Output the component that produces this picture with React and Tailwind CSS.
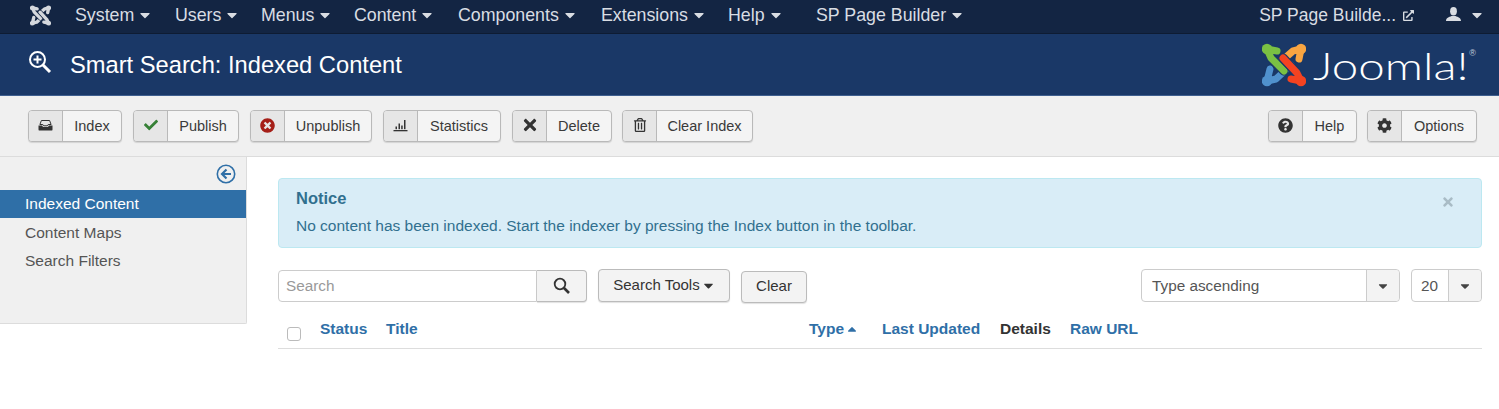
import { FaCheck, FaTimes, FaTimesCircle, FaQuestionCircle, FaCog, FaRegTrashAlt, FaCaretDown, FaCaretUp, FaExternalLinkAlt } from 'react-icons/fa';

const font = { fontFamily: '"Liberation Sans", Arial, sans-serif' };

const menu = [
  { label: 'System', w: 'w-[100px]' },
  { label: 'Users', w: 'w-[86px]' },
  { label: 'Menus', w: 'w-[93px]' },
  { label: 'Content', w: 'w-[104px]' },
  { label: 'Components', w: 'w-[143px]' },
  { label: 'Extensions', w: 'w-[127px]' },
  { label: 'Help', w: 'w-[88px]' },
  { label: 'SP Page Builder', w: 'w-[170px]' },
];

// the four strands, bottom one first
const strands = [
  'M5 38 L8 26 M5 38 L14 36 L29 22',
  'M39 6 L31 8 L15 22 M39 6 L37 16',
  'M5 6 L15 8 M5 6 L9 15 L22 28',
  'M39 38 L29 36 M39 38 L35 30 L21 15',
];

function JoomlaMark({ colors, size, bg }) {
  const ends = [[5, 38], [39, 6], [5, 6], [39, 38]];
  return (
    <svg width={size} height={size} viewBox="0 0 44 44" fill="none" strokeLinecap="round" strokeLinejoin="round">
      {strands.map((d, i) => (
        <g key={i}>
          <path d={d} stroke={bg} strokeWidth="9.5" />
          <path d={d} stroke={colors[i]} strokeWidth="7" />
          <circle cx={ends[i][0]} cy={ends[i][1]} r="5.2" fill={colors[i]} />
        </g>
      ))}
    </svg>
  );
}

function IndexIcon() {
  return (
    <svg width="15" height="11" viewBox="0 0 15 11" fill="#333">
      <path d="M3.4 0.5h8.2l1.5 4H10.2l-0.8 1.3H5.6l-0.8-1.3H1.9z" fill="none" stroke="#333" strokeWidth="1" />
      <path d="M0.5 5.6h3.6l0.9 1.4h5l0.9-1.4h3.6v3.8a1.2 1.2 0 0 1-1.2 1.2H1.7a1.2 1.2 0 0 1-1.2-1.2z" />
    </svg>
  );
}

function StatsIcon() {
  return (
    <svg width="15" height="13" viewBox="0 0 15 13" fill="#333">
      <rect x="0.5" y="11" width="14" height="1.3" />
      <rect x="2.5" y="7.5" width="1.5" height="2.7" />
      <rect x="5.5" y="4.5" width="1.5" height="5.7" />
      <rect x="8.2" y="6.5" width="1.5" height="3.7" />
      <rect x="11" y="1" width="1.5" height="9.2" />
    </svg>
  );
}

function ToolButton({ icon, label, w }) {
  return (
    <button className={`flex h-[32px] ${w} items-stretch overflow-hidden rounded-[4px] border border-[#b9b9b9] bg-[#f4f4f4] text-[14.5px] text-[#3a3a3a] shadow-[0_1px_1px_rgba(0,0,0,0.12)]`}>
      <span className="flex w-[34px] shrink-0 items-center justify-center border-r border-[#b9b9b9] bg-[#e6e6e6] pb-[2px]">{icon}</span>
      <span className="flex flex-1 items-center justify-center pt-[1px]">{label}</span>
    </button>
  );
}

function Select({ label, w, cell, text }) {
  return (
    <div className={`flex h-[33px] ${w} items-stretch rounded-[4px] border border-[#ccc] bg-white text-[15.3px] text-[#555]`}>
      <span className={`flex flex-1 items-center pt-[1px] ${text}`}>{label}</span>
      <span className={`flex ${cell} items-center justify-center rounded-r-[4px] border-l border-[#ccc] bg-[#f3f3f3]`}>
        <FaCaretDown className="text-[14px] text-[#444]" />
      </span>
    </div>
  );
}

export default function App() {
  return (
    <div className="h-[409px] w-[1499px] overflow-hidden bg-white" style={font}>
      {/* top menu */}
      <nav className="flex h-[34px] items-center border-b border-[#0e1c33] bg-[#132543] pb-[3px] text-[17.8px] text-[#d9dde3]">
        <div className="ml-[27px] mr-[21px] flex w-[27px] justify-center">
          <JoomlaMark size={21} bg="#132543" colors={['#d5d8dd', '#d5d8dd', '#d5d8dd', '#d5d8dd']} />
        </div>
        {menu.map((m) => (
          <div key={m.label} className={`flex items-center gap-[3px] ${m.w}`}>
            <span>{m.label}</span>
            <FaCaretDown className="text-[16px]" />
          </div>
        ))}
        <div className="ml-auto flex items-center">
          <span className="text-[17.5px]">SP Page Builde...</span>
          <FaExternalLinkAlt className="ml-[7px] text-[11px]" />
          <svg width="15" height="14" viewBox="0 0 15 14" fill="#d9dde3" className="ml-[32px] mb-[3px]">
            <ellipse cx="7.5" cy="4.2" rx="3.4" ry="4.2" />
            <path d="M0 14c0-3 3-4 5.5-5h4c2.500 1 5.500 2 5.500 5z" />
          </svg>
          <FaCaretDown className="ml-[8px] mr-[14px] text-[16px]" />
        </div>
      </nav>

      {/* title bar */}
      <header className="flex h-[62px] items-center border-b border-[#3f5f8f] bg-[#1a3867] pl-[28px] text-white">
        <svg width="24" height="24" viewBox="0 0 24 24" fill="none" stroke="#fff" className="mb-[6px]">
          <circle cx="9.5" cy="9.5" r="7.5" strokeWidth="2" />
          <path d="M15 15l7 7" strokeWidth="3" />
          <path d="M9.5 5.5v8M5.5 9.500h8" strokeWidth="2" />
        </svg>
        <h1 className="ml-[18px] mt-[3px] text-[23.7px] leading-none">Smart Search: Indexed Content</h1>
        <div className="ml-auto mr-[23px] flex items-center">
          <JoomlaMark size={44} bg="#1a3867" colors={['#5091cd', '#f9a541', '#7ac143', '#f44321']} />
          <span className="ml-[7px] w-[156px] origin-left scale-x-[1.25] text-[38px] leading-none" style={{ fontFamily: 'Lato, sans-serif', fontWeight: 300 }}>Joomla!</span>
          <span className="mb-[22px] text-[9px] leading-none text-[#c5cedb]">®</span>
        </div>
      </header>

      {/* toolbar */}
      <div className="flex h-[61px] items-center gap-[11px] border-b border-[#dcdcdc] bg-[#f0f0f0] pl-[28px] pr-[22px]">
        <ToolButton w="w-[94px]" label="Index" icon={<IndexIcon />} />
        <ToolButton w="w-[106px]" label="Publish" icon={<FaCheck className="text-[14px] text-[#378137]" />} />
        <ToolButton w="w-[122px]" label="Unpublish" icon={<FaTimesCircle className="text-[15px] text-[#a51f18]" />} />
        <ToolButton w="w-[118px]" label="Statistics" icon={<StatsIcon />} />
        <ToolButton w="w-[100px]" label="Delete" icon={<FaTimes className="text-[18px] text-[#333]" />} />
        <div className="-ml-[1px]">
          <ToolButton w="w-[131px]" label="Clear Index" icon={<FaRegTrashAlt className="text-[14px] text-[#333]" />} />
        </div>
        <div className="ml-auto flex gap-[10px]">
          <ToolButton w="w-[89px]" label="Help" icon={<FaQuestionCircle className="text-[15px] text-[#333]" />} />
          <ToolButton w="w-[110px]" label="Options" icon={<FaCog className="text-[15px] text-[#333]" />} />
        </div>
      </div>

      <div className="flex items-start">
        {/* sidebar */}
        <aside className="h-[167px] w-[247px] shrink-0 rounded-br-[2px] border-r border-b border-[#dcdcdc] bg-[#f0f0f0] text-[15.5px] text-[#555]">
          <div className="flex h-[33px] items-center justify-end pr-[10px]">
            <svg width="20" height="20" viewBox="0 0 20 20" fill="none" stroke="#2f6fa7">
              <circle cx="10" cy="10" r="8.7" strokeWidth="1.6" />
              <path d="M15 10H6.500M10.500 5.500L6 10l4.500 4.500" strokeWidth="2.2" />
            </svg>
          </div>
          <div className="flex h-[28px] items-center bg-[#2f6fa7] pl-[25px] text-white">Indexed Content</div>
          <div className="flex h-[28px] items-center pl-[25px] pt-[1px]">Content Maps</div>
          <div className="flex h-[28px] items-center pl-[25px] pt-[1px]">Search Filters</div>
        </aside>

        {/* main */}
        <main className="flex-1 pl-[31px] pr-[17px] pt-[21px]">
          <div className="relative h-[70px] rounded-[4px] border border-[#bce8f1] bg-[#d9edf7] pl-[17px] pt-[10px] text-[#31708f]">
            <h4 className="text-[16.5px] font-bold leading-[19px]">Notice</h4>
            <p className="mt-[9px] text-[15.5px] leading-[18px]">No content has been indexed. Start the indexer by pressing the Index button in the toolbar.</p>
            <FaTimes className="absolute right-[26px] top-[16px] text-[14px] text-[#a9bcc6]" />
          </div>

          <div className="mt-[21px] flex items-start text-[15px]">
            <div className="mt-[1px] flex h-[32px] w-[309px]">
              <div className="flex flex-1 items-center rounded-l-[4px] border border-[#ccc] bg-white pl-[7px] pt-[1px] text-[15.3px] text-[#999]">Search</div>
              <div className="flex w-[50px] items-center justify-center rounded-r-[4px] border border-l-0 border-[#bbb] bg-[#f3f3f3] shadow-[0_1px_1px_rgba(0,0,0,0.12)]">
                <svg width="17" height="17" viewBox="0 0 17 17" fill="none" stroke="#333" className="mb-[2px]">
                  <circle cx="7" cy="7" r="5.300" strokeWidth="1.800" />
                  <path d="M11 11l5 5" strokeWidth="2.600" />
                </svg>
              </div>
            </div>
            <button className="ml-[11px] flex h-[33px] w-[132px] items-center justify-center gap-0 rounded-[4px] border border-[#bbb] bg-[#f3f3f3] pl-[1px] text-[#333] shadow-[0_1px_1px_rgba(0,0,0,0.12)]">
              Search Tools <FaCaretDown className="ml-[1px] text-[15px]" />
            </button>
            <button className="ml-[11px] mt-[2px] flex h-[32px] w-[66px] items-center justify-center rounded-[4px] border border-[#bbb] bg-[#f3f3f3] pb-[1px] text-[#333] shadow-[0_1px_1px_rgba(0,0,0,0.12)]">
              Clear
            </button>
            <div className="ml-auto flex gap-[11px]">
              <Select label="Type ascending" w="w-[259px]" cell="w-[33px]" text="pl-[10px]" />
              <Select label="20" w="w-[71px]" cell="w-[33px]" text="pl-[9px]" />
            </div>
          </div>

          <div className="mt-[15px] flex h-[31px] items-center border-b border-[#ddd] pb-[8px] text-[15.5px] font-bold text-[#2f6fa7]">
            <span className="ml-[9px] mt-[9px] h-[14px] w-[14px] rounded-[3px] border border-[#bbb] bg-white" />
            <span className="ml-[19px] w-[66px]">Status</span>
            <span className="w-[423px]">Title</span>
            <span className="flex w-[73px] items-center gap-[1px]">Type <FaCaretUp className="text-[14px]" /></span>
            <span className="w-[118px]">Last Updated</span>
            <span className="w-[70px] text-[#333]">Details</span>
            <span>Raw URL</span>
          </div>
        </main>
      </div>
    </div>
  );
}
